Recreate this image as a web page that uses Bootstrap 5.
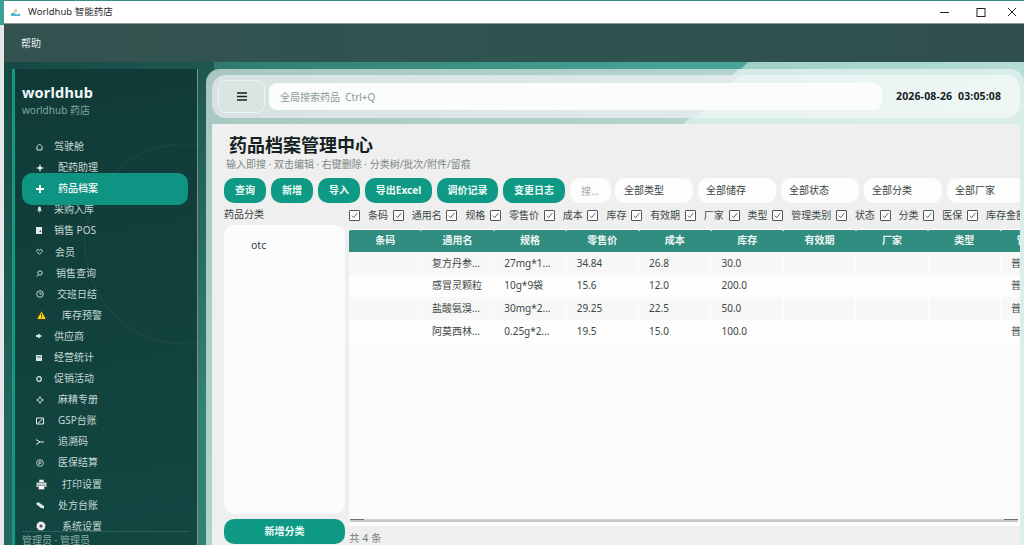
<!DOCTYPE html>
<html lang="zh">
<head>
<meta charset="utf-8">
<title>Worldhub 智能药店</title>
<link href="https://cdn.jsdelivr.net/npm/bootstrap@5.3.0/dist/css/bootstrap.min.css" rel="stylesheet">
<style>
html,body{height:545px;overflow:hidden}
body{font-family:"Noto Sans","Noto Sans CJK SC",sans-serif;font-size:10px;background:#e4e9e7;color:#2b3a38}
.app-frame{height:545px;display:flex;flex-direction:column}
.win-title{height:24px;flex:none;display:flex;align-items:center;background:#fff;margin-left:4px;border-top:1px solid #3a8f86;border-bottom:1px solid #8a9a98;padding-left:7px;color:#2a2a2a;font-size:9.5px;position:relative}
.win-edge{position:absolute;left:-4px;top:-1px;width:4px;height:25px;background:#3f9f96}
.win-btns{margin-left:auto;margin-right:1px;display:flex;align-items:center}
.win-btns svg{display:block}
.menu-strip{height:38px;flex:none;margin-left:4px;background:linear-gradient(90deg,#34524f,#2f5450 50%,#2f4f4d);color:#e6efed;padding-left:17px;display:flex;align-items:center;font-size:10px}
.shell{flex:1;min-height:0;display:flex;margin-left:4px;padding:7px 0 0 8px;background-color:#3f9b8e;background-image:linear-gradient(180deg,rgba(16,58,56,.55),rgba(16,58,56,0) 70%),linear-gradient(135deg,rgba(160,208,200,0) 49.4%,#9fd0c7 49.6%,#b7ddd6 70%),linear-gradient(100deg,#1d5a53 0%,#327e72 22%,#46a396 60%,#4aa89a 100%);background-size:210px 100%,100% 100%,100% 100%;background-repeat:no-repeat}
.side{width:186px;flex:none;display:flex;flex-direction:column;background-color:#114340;background-image:radial-gradient(circle at 170px 175px,rgba(255,255,255,0) 99px,rgba(255,255,255,.05) 100px,rgba(255,255,255,0) 101px),linear-gradient(170deg,#103a38,#134742);border-left:3px solid #0f9a85;border-right:1px solid #77928f;padding:0 9px 0 7px;color:#bcd2ce}
.side-name{font-size:14.5px;font-weight:700;color:#f1f7f6;margin-top:13px;line-height:20px;letter-spacing:.2px}
.side-sub{font-size:10px;color:#7fa8a2;line-height:15px;margin-bottom:18px;margin-top:1px}
.side-nav{flex:1;min-height:0;overflow:hidden}
.nav-row{height:21.1px;display:flex;align-items:center;padding-left:14px;color:#c4d8d4;white-space:nowrap;text-decoration:none}
.nav-row.on{height:32px;margin:-5.45px 0;background:#0f9382;border-radius:10px;color:#f2faf8;font-weight:500;position:relative}
.slot{flex:none;display:flex;align-items:center}
.slot svg{display:block}
.s18{width:18px}.s19{width:19px}.s20{width:20px}.s21{width:21px}.s22{width:22px}.s26{width:26px}
.side-foot{border-top:1px solid #2f605b;height:14px;line-height:16px;color:#87aca6;flex:none;overflow:hidden}
.main-wrap{flex:1;min-width:0;margin-left:8px;padding:6px 4px 0 6px;border-radius:14px 14px 0 0;background-image:linear-gradient(135deg,#a8c7c0 0%,#b4d3cd 41%,#d6ebe7 41.3%,#dcefeb 100%);display:flex;flex-direction:column}
.top-strip{height:43px;flex:none;margin-bottom:6px;border-radius:14px;background-image:linear-gradient(135deg,#d8e3e1 0%,#e0eae8 61.8%,#e8f3f1 62.2%,#eff7f5 100%);display:flex;align-items:center;padding-left:6px}
.burger{width:47px;height:33px;flex:none;padding:0;border:1px solid #ecf2f1;border-radius:8px;background:#d9e4e3;display:flex;align-items:center;justify-content:center}
.global-find{width:613px;height:27px;flex:none;margin-left:4px;border:0;border-radius:8px;background:#fbfdfc;font-size:10px;padding:0 11px;color:#333}
.global-find::placeholder{color:#8d9997}
.clock{margin-left:14px;font-weight:700;font-size:10.5px;color:#16211f;white-space:pre;letter-spacing:.15px}
.page-box{flex:1;min-height:0;background:#efefef;padding:0 0 0 12px;overflow:hidden;display:flex;flex-direction:column}
.page-head{font-size:18px;font-weight:700;color:#14211f;line-height:24px;margin:9px 0 0 5px}
.page-sub{color:#7b8684;font-size:10px;line-height:14px;margin:0 0 7px 2px}
.tool-line{display:flex;gap:5px;height:25px;flex:none;width:900px;margin-bottom:5px}
.tool-btn{height:25px;padding:0;border:0;border-radius:10px;background:#0f9a85;color:#eefaf7;font-weight:700;font-size:10px;flex:none}
.tool-btn:hover{background:#0f9a85;color:#eefaf7}
.w42{width:42px}.w67{width:67px}.w61{width:61px}.w62{width:62px}
.mini-find{width:41px;height:25px;flex:none;border:0;border-radius:10px;padding:0 11px;font-size:10px;background:#fdfdfd}
.mini-find::placeholder{color:#a3a9a8}
.filter-pick{width:78px;height:25px;flex:none;border:0;border-radius:10px;padding:0 0 0 8px;font-size:10px;background:#fdfdfd;color:#3a4442;background-image:none}
.tool-line .filter-pick:first-of-type{margin-left:-1px;padding-left:9px}
.split{flex:1;min-height:0;display:flex;gap:4px}
.tree-col{width:121px;flex:none;display:flex;flex-direction:column}
.tree-cap{height:17px;line-height:12px;color:#37413f;font-size:10px}
.tree-box{flex:1;min-height:0;background:#fcfcfc;border-radius:10px;padding:13px 0 0 27px;color:#33403e;font-size:10.5px;margin-bottom:5px}
.tree-add{height:25px;flex:none;padding:0;width:121px;border:0;border-radius:10px;margin-bottom:1px;background:#0f9a85;color:#eefaf7;font-weight:700;font-size:10px}
.tree-add:hover{background:#0f9a85;color:#eefaf7}
.grid-col{flex:1;min-width:0;display:flex;flex-direction:column;overflow:hidden}
.col-ticks{height:22px;flex:none;display:flex;align-items:center;white-space:nowrap;overflow:hidden;color:#3c4846;padding-bottom:7px}
.col-ticks .form-check-input{width:11px;height:11px;margin:0 8px 0 0;flex:none;border:1px solid #555;border-radius:1px;background-color:#fdfdfd;background-image:url("data:image/svg+xml,%3Csvg xmlns='http://www.w3.org/2000/svg' viewBox='0 0 12 12'%3E%3Cpath d='M2.5 6.2l2.4 2.6 4.8-6' fill='none' stroke='%23444' stroke-width='1.1'/%3E%3C/svg%3E");background-size:100% 100%}
.col-ticks label{margin-right:4.7px}
.grid-frame{height:297px;flex:none;background:#fbfbfb;display:flex;flex-direction:column;overflow:hidden;margin-top:-1px;border-top:1px solid #fff;position:relative}
.sort-tick{position:absolute;left:33px;top:0;border:3px solid transparent;border-top:3px solid #5d7f79;border-bottom:0}
.grid-table{table-layout:fixed;width:796px;margin:0;font-size:10px;border-collapse:collapse}
.grid-table th{width:72.4px;height:22px;padding:0 0 2px;background:#318d80;color:#f0f8f6;text-align:center;font-weight:600;border:0;position:relative;vertical-align:middle;--bs-table-bg:#318d80}
.grid-table th::before{content:"";position:absolute;left:-1px;top:-1px;width:2px;height:2px;background:#eef5f3;border-radius:50%}
.grid-table td{height:22.6px;padding:0 0 0 10px;border:0;border-right:1px solid #fdfdfd;color:#3d4745;white-space:nowrap;overflow:hidden;vertical-align:middle;background:#f7f7f7;--bs-table-bg:#f7f7f7}
.grid-table tr:nth-child(even) td{background:#fdfdfd;--bs-table-bg:#fdfdfd}
.h-track{margin-top:auto;margin-bottom:4px;height:3px;flex:none;position:relative;background:linear-gradient(#d0d6d4,#bfc7c4);margin-left:1px;margin-right:2px}
.h-end{position:absolute;top:0;width:14px;height:1px;background:#6d7573}
.h-end.lft{left:0}
.h-end.rgt{right:0}
.tally{height:18px;line-height:18px;padding-top:3px;color:#747e7c;font-size:10.5px;flex:none}
</style>
</head>
<body>
<div class="app-frame">
  <div class="win-title">
    <span class="win-edge"></span>
    <svg width="9" height="9" viewBox="0 0 9 9" class="me-1"><circle cx="4.500" cy="3" r="2" fill="#e7d2a8"/><path d="M0 6c2-2 3-1 4.500 0s3 0 4.500-1v3H0z" fill="#4fb6c6"/></svg>
    <span class="ms-1">Worldhub 智能药店</span>
    <div class="win-btns">
      <svg width="36" height="22" viewBox="0 0 36 22"><path d="M13 11.500h9" stroke="#222" stroke-width="1"/></svg>
      <svg width="36" height="22" viewBox="0 0 36 22"><rect x="14" y="7.500" width="8" height="8" fill="none" stroke="#222"/></svg>
      <svg width="24" height="22" viewBox="0 0 24 22"><path d="M9 7l8 8M17 7l-8 8" stroke="#222" stroke-width="1"/></svg>
    </div>
  </div>
  <div class="menu-strip">帮助</div>
  <div class="shell">
    <aside class="side">
      <div class="side-name">worldhub</div>
      <div class="side-sub">worldhub 药店</div>
      <nav class="side-nav">
        <a class="nav-row"><span class="slot s18"><svg width="7" height="8" viewBox="0 0 7 8"><path d="M1 3.500L3.500 1 6 3.500V7H1z" fill="none" stroke="#cfe0dd"/></svg></span>驾驶舱</a>
        <a class="nav-row"><span class="slot s22"><svg width="8" height="8" viewBox="0 0 8 8"><path d="M4 0l1 3 3 1-3 1-1 3-1-3-3-1 3-1z" fill="#f2f8f7"/></svg></span>配药助理</a>
        <a class="nav-row on"><span class="slot s22"><svg width="8" height="8" viewBox="0 0 8 8"><path d="M3 0h2v3h3v2H5v3H3V5H0V3h3z" fill="#fff"/></svg></span>药品档案</a>
        <a class="nav-row"><span class="slot s18"><svg width="7" height="7" viewBox="0 0 7 7"><path d="M3.500.5C5 .5 5 2 5 4l1 1H1l1-1c0-2 0-3.500 1.500-3.500zM2.800 5.500h1.400v1H2.800z" fill="#cfe0dd"/></svg></span>采购入库</a>
        <a class="nav-row"><span class="slot s18"><svg width="6" height="7" viewBox="0 0 6 7"><path d="M0 0h6v7H0z" fill="#e2eeec"/><path d="M3 5l2-2v2z" fill="#335"/></svg></span>销售 POS</a>
        <a class="nav-row"><span class="slot s19"><svg width="7" height="6" viewBox="0 0 7 6"><path d="M3.500 5.300L.8 2.500C.2 1.500 1 .5 2 .5c.7 0 1.200.4 1.500 1 .3-.6.800-1 1.500-1 1 0 1.800 1 1.200 2z" fill="none" stroke="#cfe0dd" stroke-width=".9"/></svg></span>会员</a>
        <a class="nav-row"><span class="slot s20"><svg width="7" height="7" viewBox="0 0 7 7"><circle cx="4" cy="3" r="2.200" fill="none" stroke="#cfe0dd"/><path d="M2.400 4.600L.8 6.500" stroke="#cfe0dd"/></svg></span>销售查询</a>
        <a class="nav-row"><span class="slot s21"><svg width="8" height="8" viewBox="0 0 8 8"><circle cx="4" cy="4" r="3.300" fill="none" stroke="#cfe0dd" stroke-width=".9"/><path d="M4 1.800V4h2.200" fill="none" stroke="#cfe0dd" stroke-width=".9"/></svg></span>交班日结</a>
        <a class="nav-row"><span class="slot s26"><svg width="11" height="10" viewBox="0 0 11 10"><path d="M5.500.6l5 8.900H.5z" fill="#f5d90a" stroke="#222" stroke-width=".8"/><path d="M5.500 3.500v3M5.500 7.300v1" stroke="#222" stroke-width=".8"/></svg></span>库存预警</a>
        <a class="nav-row"><span class="slot s18"><svg width="6" height="6" viewBox="0 0 6 6"><path d="M0 2h2V.5L6 3 2 5.500V4H0z" fill="#dbe8e6"/></svg></span>供应商</a>
        <a class="nav-row"><span class="slot s18"><svg width="6" height="6" viewBox="0 0 6 6"><path d="M0 0h6v6H0z" fill="#dbe8e6"/><path d="M1 2h4" stroke="#335" stroke-width=".8"/></svg></span>经营统计</a>
        <a class="nav-row"><span class="slot s18"><svg width="6" height="6" viewBox="0 0 6 6"><circle cx="3" cy="3" r="2.300" fill="none" stroke="#dbe8e6" stroke-width="1.200"/></svg></span>促销活动</a>
        <a class="nav-row"><span class="slot s22"><svg width="8" height="8" viewBox="0 0 8 8"><path d="M4 .5l1 2.500 2.500 1L5 5 4 7.500 3 5 .5 4 3 3z" fill="none" stroke="#dbe8e6" stroke-width=".8"/></svg></span>麻精专册</a>
        <a class="nav-row"><span class="slot s22"><svg width="8" height="8" viewBox="0 0 8 8"><path d="M.5 1h7v6h-7z" fill="none" stroke="#e5efed"/><path d="M2 6l4.500-4" stroke="#e5efed"/></svg></span>GSP台账</a>
        <a class="nav-row"><span class="slot s22"><svg width="8" height="6" viewBox="0 0 8 6"><path d="M0 .5l4 2.500h4M0 5.500L4 3" fill="none" stroke="#e5efed"/></svg></span>追溯码</a>
        <a class="nav-row"><span class="slot s22"><svg width="8" height="8" viewBox="0 0 8 8"><circle cx="4" cy="4" r="3.400" fill="none" stroke="#cfe0dd" stroke-width=".8"/><path d="M3 6V2.300h1.300a1 1 0 010 2.200H3" fill="none" stroke="#cfe0dd" stroke-width=".8"/></svg></span>医保结算</a>
        <a class="nav-row"><span class="slot s26"><svg width="11" height="11" viewBox="0 0 11 11"><path d="M3 .5h5v3H3z" fill="#eef2f1" stroke="#333" stroke-width=".5"/><path d="M.5 3.500h10v4.500H.5z" fill="#c3cdcb"/><path d="M2.500 6.500h6v4h-6z" fill="#f5f7f7" stroke="#556" stroke-width=".5"/></svg></span>打印设置</a>
        <a class="nav-row"><span class="slot s22"><svg width="8" height="7" viewBox="0 0 8 7"><path d="M0 2l2-2 6 4v2.500L5 6z" fill="#dbe8e6"/></svg></span>处方台账</a>
        <a class="nav-row"><span class="slot s26"><svg width="10" height="10" viewBox="0 0 10 10"><circle cx="5" cy="5" r="4.600" fill="#e7eeed"/><circle cx="5" cy="5" r="4.600" fill="none" stroke="#333" stroke-width=".7" stroke-dasharray="1.500 2"/><circle cx="5" cy="5" r="1.600" fill="#555"/></svg></span>系统设置</a>
      </nav>
      <div class="side-foot">管理员 · 管理员</div>
    </aside>
    <main class="main-wrap">
      <div class="top-strip">
        <button class="btn burger" type="button"><svg width="10" height="9" viewBox="0 0 10 9"><path d="M0 1h10M0 4.500h10M0 8h10" stroke="#15201f" stroke-width="1.500"/></svg></button>
        <input class="form-control global-find" placeholder="全局搜索药品  Ctrl+Q">
        <div class="clock">2026-08-26  03:05:08</div>
      </div>
      <section class="page-box">
        <div class="page-head">药品档案管理中心</div>
        <div class="page-sub">输入即搜 · 双击编辑 · 右键删除 · 分类树/批次/附件/留痕</div>
        <div class="tool-line">
          <button class="btn tool-btn w42">查询</button>
          <button class="btn tool-btn w42">新增</button>
          <button class="btn tool-btn w42">导入</button>
          <button class="btn tool-btn w67">导出Excel</button>
          <button class="btn tool-btn w61">调价记录</button>
          <button class="btn tool-btn w62">变更日志</button>
          <input class="form-control mini-find" placeholder="搜...">
          <select class="form-select filter-pick"><option>全部类型</option></select>
          <select class="form-select filter-pick"><option>全部储存</option></select>
          <select class="form-select filter-pick"><option>全部状态</option></select>
          <select class="form-select filter-pick"><option>全部分类</option></select>
          <select class="form-select filter-pick"><option>全部厂家</option></select>
        </div>
        <div class="split">
          <div class="tree-col">
            <div class="tree-cap">药品分类</div>
            <div class="tree-box">otc</div>
            <button class="btn tree-add">新增分类</button>
          </div>
          <div class="grid-col">
            <div class="col-ticks">
              <input class="form-check-input" type="checkbox" checked><label>条码</label>
              <input class="form-check-input" type="checkbox" checked><label>通用名</label>
              <input class="form-check-input" type="checkbox" checked><label>规格</label>
              <input class="form-check-input" type="checkbox" checked><label>零售价</label>
              <input class="form-check-input" type="checkbox" checked><label>成本</label>
              <input class="form-check-input" type="checkbox" checked><label>库存</label>
              <input class="form-check-input" type="checkbox" checked><label>有效期</label>
              <input class="form-check-input" type="checkbox" checked><label>厂家</label>
              <input class="form-check-input" type="checkbox" checked><label>类型</label>
              <input class="form-check-input" type="checkbox" checked><label>管理类别</label>
              <input class="form-check-input" type="checkbox" checked><label>状态</label>
              <input class="form-check-input" type="checkbox" checked><label>分类</label>
              <input class="form-check-input" type="checkbox" checked><label>医保</label>
              <input class="form-check-input" type="checkbox" checked><label>库存金额</label>
            </div>
            <div class="grid-frame">
              <table class="table grid-table">
                <thead><tr><th>条码</th><th>通用名</th><th>规格</th><th>零售价</th><th>成本</th><th>库存</th><th>有效期</th><th>厂家</th><th>类型</th><th>管理类别</th><th>状态</th></tr></thead>
                <tbody>
                  <tr><td></td><td>复方丹参...</td><td>27mg*1...</td><td>34.84</td><td>26.8</td><td>30.0</td><td></td><td></td><td></td><td>普通</td><td></td></tr>
                  <tr><td></td><td>感冒灵颗粒</td><td>10g*9袋</td><td>15.6</td><td>12.0</td><td>200.0</td><td></td><td></td><td></td><td>普通</td><td></td></tr>
                  <tr><td></td><td>盐酸氨溴...</td><td>30mg*2...</td><td>29.25</td><td>22.5</td><td>50.0</td><td></td><td></td><td></td><td>普通</td><td></td></tr>
                  <tr><td></td><td>阿莫西林...</td><td>0.25g*2...</td><td>19.5</td><td>15.0</td><td>100.0</td><td></td><td></td><td></td><td>普通</td><td></td></tr>
                </tbody>
              </table>
              <span class="sort-tick"></span>
              <div class="h-track"><span class="h-end lft"></span><span class="h-end rgt"></span></div>
            </div>
            <div class="tally">共 4 条</div>
          </div>
        </div>
      </section>
    </main>
  </div>
</div>
<script src="https://cdn.jsdelivr.net/npm/bootstrap@5.3.0/dist/js/bootstrap.bundle.min.js"></script>
</body>
</html>
